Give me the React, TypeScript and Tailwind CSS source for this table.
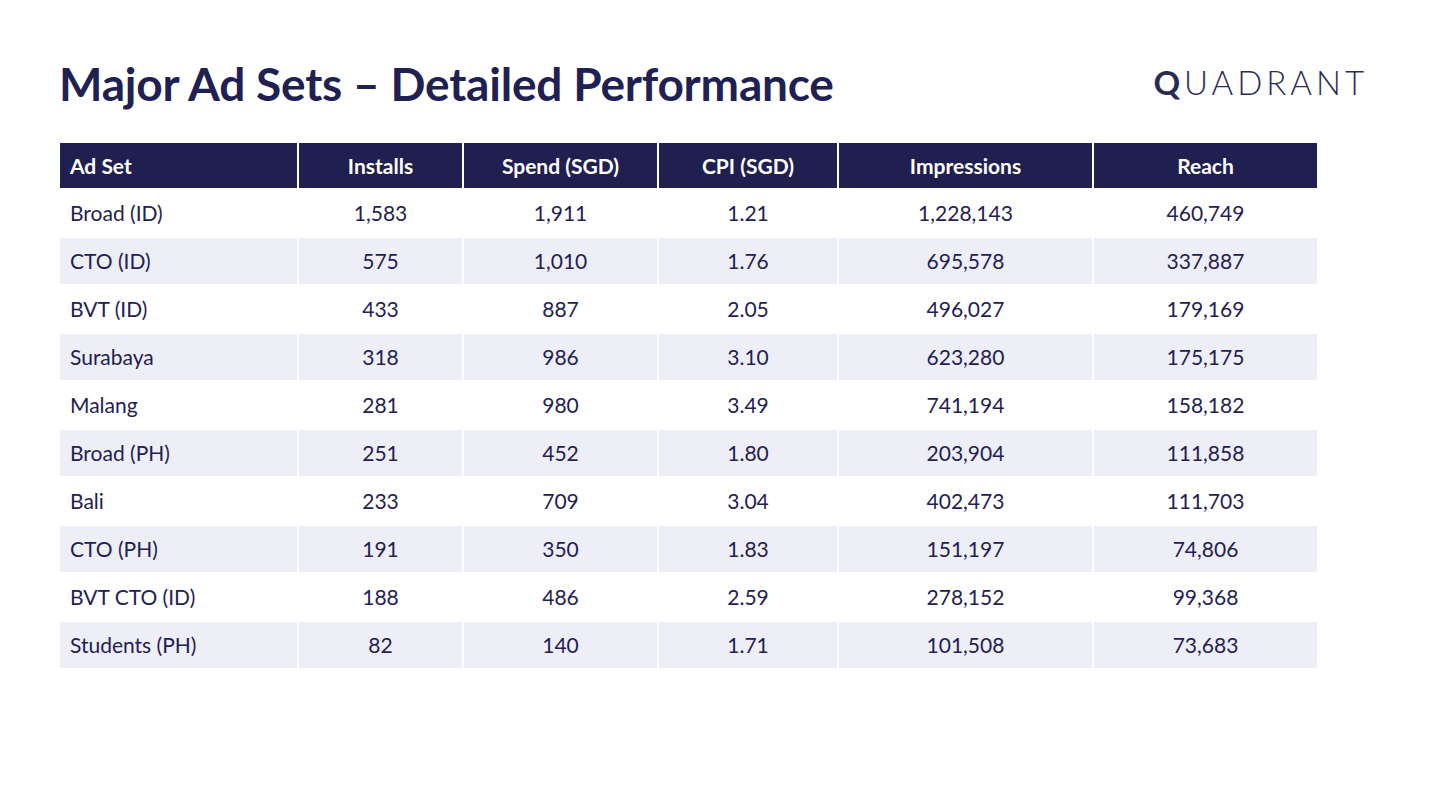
import React from "react";

// ── Data ────────────────────────────────────────────────────────────

const rows = [
  ["Broad (ID)", "1,583", "1,911", "1.21", "1,228,143", "460,749"],
  ["CTO (ID)", "575", "1,010", "1.76", "695,578", "337,887"],
  ["BVT (ID)", "433", "887", "2.05", "496,027", "179,169"],
  ["Surabaya", "318", "986", "3.10", "623,280", "175,175"],
  ["Malang", "281", "980", "3.49", "741,194", "158,182"],
  ["Broad (PH)", "251", "452", "1.80", "203,904", "111,858"],
  ["Bali", "233", "709", "3.04", "402,473", "111,703"],
  ["CTO (PH)", "191", "350", "1.83", "151,197", "74,806"],
  ["BVT CTO (ID)", "188", "486", "2.59", "278,152", "99,368"],
  ["Students (PH)", "82", "140", "1.71", "101,508", "73,683"],
];

const headers = ["Ad Set", "Installs", "Spend (SGD)", "CPI (SGD)", "Impressions", "Reach"];
const widths = ["w-[239px]", "w-[165px]", "w-[195px]", "w-[180px]", "w-[255px]", "w-[225px]"];

// ── Component ───────────────────────────────────────────────────────

export default function App() {
  return (
    <div className="w-[1440px] h-[810px] bg-white font-['Lato','Liberation_Sans',sans-serif] text-[#1f2152]">
      <div className="flex items-start justify-between pl-[59px] pr-[72px] pt-[55px]">
        <h1 className="text-[46px] font-bold leading-[58px] tracking-[-0.2px]">
          Major Ad Sets – Detailed Performance
        </h1>
        <div className="mt-[3px] text-[33px] font-light tracking-[4px] text-[#2a2b55]">
          <span className="font-bold">Q</span>UADRANT
        </div>
      </div>

      <table className="ml-[58px] mt-[28px] border-collapse text-[21px]">
        <thead>
          <tr className="bg-[#1f1f50] text-white">
            {headers.map((h, i) => (
              <th
                key={h}
                className={`${widths[i]} h-[47px] border-2 border-white font-bold ${
                  i === 0 ? "pl-[10px] text-left" : "text-center"
                }`}
              >
                {h}
              </th>
            ))}
          </tr>
        </thead>
        <tbody>
          {rows.map((r, ri) => (
            <tr key={r[0]} className={ri % 2 === 1 ? "bg-[#eeeef6]" : "bg-white"}>
              {r.map((c, ci) => (
                <td
                  key={ci}
                  className={`h-[48px] border-2 border-white ${
                    ci === 0 ? "pl-[10px] text-left" : "text-center"
                  }`}
                >
                  {c}
                </td>
              ))}
            </tr>
          ))}
        </tbody>
      </table>
    </div>
  );
}
